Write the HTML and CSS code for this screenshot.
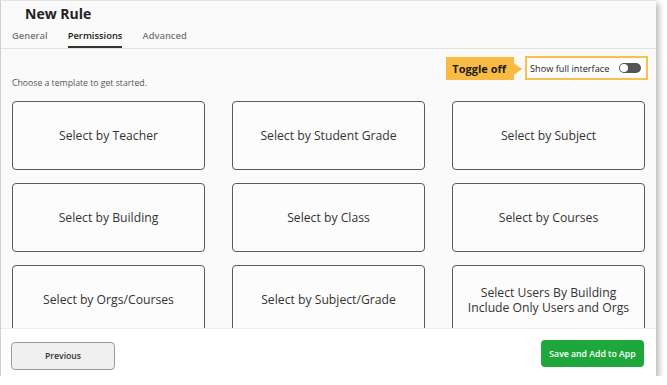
FILE: index.html
```html
<!DOCTYPE html>
<html lang="en">
<head>
  <meta charset="UTF-8" />
  <title>New Rule</title>
  <link rel="stylesheet" href="styles.css">
</head>
<body>
  <div class="panel">
    <div class="header">
      <div class="title">New Rule</div>
      <div class="tabs">
        <span class="tab">General</span>
        <span class="tab active">Permissions</span>
        <span class="tab">Advanced</span>
      </div>
    </div>

    <div class="content">
      <div class="toggle-row">
        <span class="callout">Toggle off</span>
        <label class="toggle-box">
          <span>Show full interface</span>
          <span class="switch"><span class="knob"></span></span>
        </label>
      </div>
      <p class="intro">Choose a template to get started.</p>
      <div class="cards">
        <button class="card">Select by Teacher</button>
        <button class="card">Select by Student Grade</button>
        <button class="card">Select by Subject</button>
        <button class="card">Select by Building</button>
        <button class="card">Select by Class</button>
        <button class="card">Select by Courses</button>
        <button class="card">Select by Orgs/Courses</button>
        <button class="card">Select by Subject/Grade</button>
        <button class="card"><span class="line">Select Users By Building</span><span class="line">Include Only Users and Orgs</span></button>
      </div>
    </div>

    <div class="footer">
      <button class="prev-btn">Previous</button>
      <button class="save-btn">Save and Add to App</button>
    </div>
  </div>
</body>
</html>
```

FILE: styles.css
```css
/* ——— New rule dialog ——— */
body { margin: 0; background: #fff; font-family: "Open Sans", sans-serif; color: #333; }
.panel {
  width: 656px; height: 376px; background: #fafafa;
  border-left: 1px solid #cfcfcf; border-top: 1px solid #e4e4e4;
  box-shadow: 3px 3px 6px rgba(0,0,0,0.28);
  display: flex; flex-direction: column; box-sizing: border-box;
}
.header { border-bottom: 1px solid #e2e2e2; padding-top: 4px; }
.title { font-size: 14px; font-weight: 700; color: #222; line-height: 18px; padding-left: 24px; }
.tabs { display: flex; gap: 20px; padding: 7px 0 0 11px; }
.tab { font-size: 9.4px; font-weight: 600; color: #777; line-height: 12px; padding-bottom: 4px; border-bottom: 2px solid transparent; }
.tab.active { color: #222; border-bottom-color: #333; }

.content { flex: 1; overflow: hidden; padding: 0 11px; }
.toggle-row { display: flex; justify-content: flex-end; align-items: center; margin: 7px -3px 0 0; }
.callout {
  position: relative; background: #f8bc45; color: #1a1a1a;
  font-size: 11px; font-weight: 700; line-height: 23px; padding: 0 8px 0 6px; margin-right: 11px;
}
.callout::after {
  content: ""; position: absolute; right: -8px; top: 6px;
  border-left: 8px solid #f8bc45; border-top: 6px solid transparent; border-bottom: 6px solid transparent;
}
.toggle-box {
  display: flex; align-items: center; justify-content: space-between;
  width: 123px; height: 24px; box-sizing: border-box; padding: 0 5px 0 3px;
  border: 2px solid #f8c04f; font-size: 9.2px; color: #222; background: #fff;
}
.switch { width: 22px; height: 10px; border-radius: 5px; background: #555; display: flex; align-items: center; padding-left: 1px; box-sizing: border-box; }
.knob { width: 8px; height: 8px; border-radius: 50%; background: #fff; }
.intro { margin: -3px 0 0; font-size: 8.7px; color: #555; line-height: 12px; }
.cards {
  display: grid; grid-template-columns: repeat(3, 193px); grid-auto-rows: 69px;
  column-gap: 27px; row-gap: 13px; margin-top: 12px;
}
.card {
  background: #fcfcfc; border: 1px solid #5a5a5a; border-radius: 4px;
  font-family: "Open Sans", sans-serif; font-size: 12.2px; color: #333; line-height: 15px; cursor: pointer;
  display: flex; flex-direction: column; align-items: center; justify-content: center;
}
.line { display: block; }

.footer {
  height: 48px; flex-shrink: 0; background: #fff; border-top: 1px solid #ececec;
  display: flex; align-items: flex-start; justify-content: space-between; padding: 12px 12px 0 10px;
  box-sizing: border-box;
}
.prev-btn {
  width: 104px; height: 28px; margin-top: 1px; background: #f0f0f0; border: 1px solid #9a9a9a; border-radius: 4px;
  font-family: "Open Sans", sans-serif; font-size: 8.7px; font-weight: 600; color: #333;
}
.save-btn {
  width: 103px; height: 27px; margin-top: -1px; background: #1ea83c; border: none; border-radius: 4px;
  font-family: "Open Sans", sans-serif; font-size: 8.7px; font-weight: 600; color: #fff;
}
```
